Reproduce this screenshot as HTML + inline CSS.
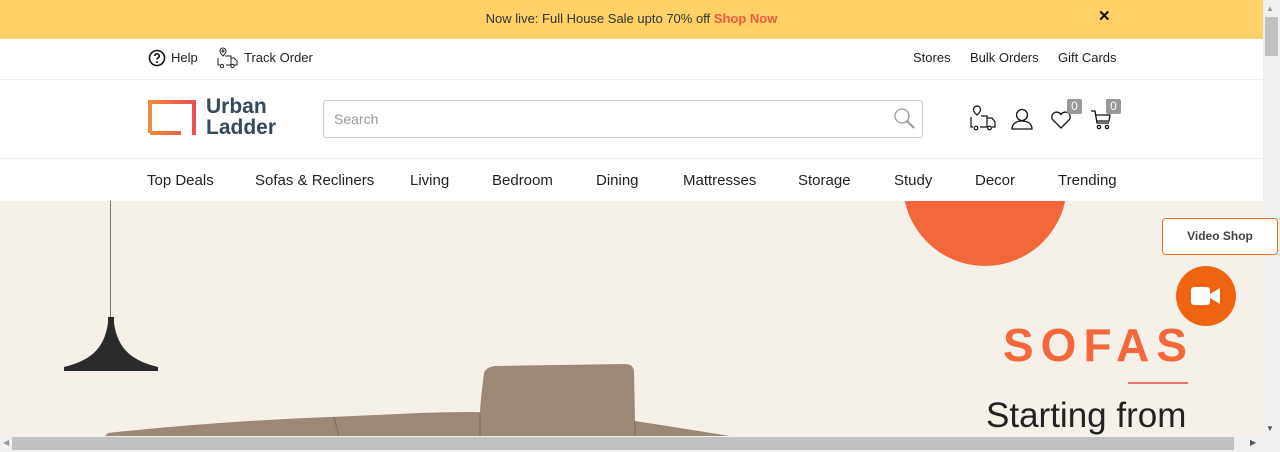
<!DOCTYPE html>
<html><head><meta charset="utf-8"><style>
*{margin:0;padding:0;box-sizing:border-box}
body{width:1280px;height:452px;overflow:hidden;font-family:"Liberation Sans",sans-serif;color:#222;position:relative;background:#fff}
.page{position:absolute;left:0;top:0;width:1263px;height:436px;overflow:hidden}
.top{height:39px;background:#ffd166;text-align:center;font-size:13px;line-height:37px;color:#333;position:relative}
.top b{color:#ef5a3c;font-weight:bold}
.x{position:absolute;left:1098px;top:5px;line-height:24px;font-size:15px;font-weight:bold;color:#111}
.util{height:41px;border-bottom:1px solid #eee;position:relative;font-size:13px;color:#222}
.util span{position:absolute;top:11px}
.hdr{height:79px;border-bottom:1px solid #eee;position:relative}
.nav{height:42px;position:relative;font-size:15px;color:#222}
.nav span{position:absolute;top:13px}
.hero{position:absolute;top:201px;left:0;width:1263px;height:235px;background:#f5f1e8;overflow:hidden}
.sb{position:absolute;background:#f0f0f0}
</style></head><body>
<div class="page">
<div class="top">Now live: Full House Sale upto 70% off <b>Shop Now</b><span class="x">✕</span></div>
<div class="util">
<svg style="position:absolute;left:148px;top:10px" width="18" height="18" viewBox="0 0 18 18"><circle cx="9" cy="9" r="7.5" fill="none" stroke="#111" stroke-width="1.6"/><path d="M6.8 7a2.2 2.2 0 1 1 3 2c-.7.3-.8.8-.8 1.5" fill="none" stroke="#111" stroke-width="1.6"/><circle cx="9" cy="13" r="1" fill="#111"/></svg>
<span style="left:171px">Help</span>
<svg style="position:absolute;left:217px;top:8px" width="22" height="22" viewBox="0 0 22 22" fill="none" stroke="#222" stroke-width="1"><path d="M6 1a3 3 0 0 1 3 3c0 2-3 5-3 5s-3-3-3-5a3 3 0 0 1 3-3z"/><circle cx="6" cy="4" r="1"/><path d="M1 11v7h2M9 18h5M17 18h3v-4l-3-3h-3v7M14 11V9H8"/><circle cx="5" cy="19" r="1.6"/><circle cx="15.5" cy="19" r="1.6"/></svg>
<span style="left:244px">Track Order</span>
<span style="left:913px">Stores</span><span style="left:970px">Bulk Orders</span><span style="left:1058px">Gift Cards</span>
</div>
<div class="hdr">
<svg style="position:absolute;left:148px;top:20px" width="48" height="35" viewBox="0 0 48 35"><defs><linearGradient id="g" x1="0" x2="1"><stop offset="0" stop-color="#f08a3a"/><stop offset="1" stop-color="#ea5050"/></linearGradient></defs><path d="M2 33V2h44v33M2 33h31" fill="none" stroke="url(#g)" stroke-width="4"/></svg>
<div style="position:absolute;left:206px;top:16px;font-size:21px;font-weight:bold;color:#34495e;line-height:21px">Urban<br>Ladder</div>
<div style="position:absolute;left:323px;top:20px;width:600px;height:38px;border:1px solid #ccc;border-radius:3px;font-size:14px;color:#999;padding:10px 10px">Search
<svg style="position:absolute;right:5px;top:6px" width="24" height="24" viewBox="0 0 24 24" fill="none" stroke="#999" stroke-width="1.3"><circle cx="9" cy="9" r="7"/><path d="M14 14l7 7" stroke-width="2"/></svg></div>
<svg style="position:absolute;left:970px;top:25px" width="26" height="26" viewBox="0 0 26 26" fill="none" stroke="#111" stroke-width="1.2"><path d="M7 1a3.5 3.5 0 0 1 3.5 3.5C10.5 7 7 10 7 10S3.5 7 3.5 4.5A3.5 3.5 0 0 1 7 1z"/><path d="M1 12v10h2M10 22h7M22 22h3v-5l-3-4h-5v9M17 13V11H11"/><circle cx="6" cy="23" r="1.8"/><circle cx="19.5" cy="23" r="1.8"/></svg>
<svg style="position:absolute;left:1011px;top:28px" width="22" height="22" viewBox="0 0 22 22" fill="none" stroke="#111" stroke-width="1.3"><circle cx="11" cy="7" r="5.5"/><path d="M1 21c0-5 4-8 10-8s10 3 10 8z"/></svg>
<svg style="position:absolute;left:1050px;top:30px" width="22" height="20" viewBox="0 0 22 20" fill="none" stroke="#111" stroke-width="1.3"><path d="M11 18L2.5 9.5a4.8 4.8 0 0 1 8.5-5 4.8 4.8 0 0 1 8.5 5z"/></svg>
<div style="position:absolute;left:1067px;top:19px;width:15px;height:15px;background:#999;color:#fff;font-size:12px;text-align:center;line-height:15px;border-radius:2px">0</div>
<svg style="position:absolute;left:1090px;top:29px" width="22" height="22" viewBox="0 0 22 22" fill="none" stroke="#111" stroke-width="1.3"><path d="M1 2h4l2 12h12M6 6h14l-1 6H7"/><circle cx="9" cy="18" r="1.6"/><circle cx="17" cy="18" r="1.6"/></svg>
<div style="position:absolute;left:1106px;top:19px;width:15px;height:15px;background:#999;color:#fff;font-size:12px;text-align:center;line-height:15px;border-radius:2px">0</div>
</div>
<div class="nav">
<span style="left:147px">Top Deals</span><span style="left:255px">Sofas &amp; Recliners</span><span style="left:410px">Living</span><span style="left:492px">Bedroom</span><span style="left:596px">Dining</span><span style="left:683px">Mattresses</span><span style="left:798px">Storage</span><span style="left:894px">Study</span><span style="left:975px">Decor</span><span style="left:1058px">Trending</span>
</div>
<div class="hero">
<div style="position:absolute;left:903px;top:-99px;width:164px;height:164px;border-radius:50%;background:#f4673b"></div>
<div style="position:absolute;left:110px;top:0;width:1px;height:118px;background:#777"></div>
<svg style="position:absolute;left:62px;top:116px" width="98" height="56" viewBox="0 0 98 56"><path d="M46 0h6v6c4 28 20 38 44 44v4H2v-4C26 44 42 34 46 6z" fill="#2a2a2a"/></svg>
<svg style="position:absolute;left:100px;top:160px" width="660" height="80" viewBox="0 0 660 80"><path d="M0 80 L8 72 Q120 60 230 56 L320 52 Q380 50 400 52 L380 52 Q380 44 384 12 Q386 6 395 5 L525 3 Q533 3 534 10 L535 60 Q600 70 660 80z" fill="#9c8876"/><path d="M380 52 V80 M234 56 L240 80 M535 60 V80" stroke="#7d6b5b" stroke-width="1"/></svg>
<div style="position:absolute;left:1003px;top:117px;font-size:46px;font-weight:bold;letter-spacing:7px;color:#f4673b">SOFAS</div>
<div style="position:absolute;left:1128px;top:181px;width:60px;height:2px;background:#ec7070"></div>
<div style="position:absolute;left:986px;top:195px;font-size:35px;color:#222">Starting from</div>
</div>
<div style="position:absolute;left:1176px;top:266px;width:60px;height:60px;border-radius:50%;background:#ef640f"></div>
<svg style="position:absolute;left:1191px;top:286px" width="30" height="20" viewBox="0 0 30 20"><rect x="0" y="1" width="19" height="18" rx="3" fill="#fff"/><path d="M19 8l10-6v16l-10-6z" fill="#fff"/></svg>
</div>
<div class="sb" style="left:1263px;top:0;width:17px;height:452px"></div>
<div style="position:absolute;left:1162px;top:218px;width:116px;height:37px;border:1px solid #f07020;border-radius:4px;background:#fff;font-size:12px;font-weight:bold;color:#444;text-align:center;line-height:35px">Video Shop</div>
<div style="position:absolute;left:1265px;top:17px;width:13px;height:39px;background:#c1c1c1"></div>
<div style="position:absolute;left:1266px;top:424px;font-size:8px;color:#555">▼</div>
<div style="position:absolute;left:1266px;top:4px;font-size:8px;color:#999">▲</div>
<div class="sb" style="left:0;top:436px;width:1263px;height:16px"></div>
<div style="position:absolute;left:12px;top:437px;width:1222px;height:13px;background:#c1c1c1"></div>
<div style="position:absolute;left:3px;top:438px;font-size:8px;color:#999">◀</div>
<div style="position:absolute;left:1250px;top:438px;font-size:8px;color:#555">▶</div>
</body></html>
